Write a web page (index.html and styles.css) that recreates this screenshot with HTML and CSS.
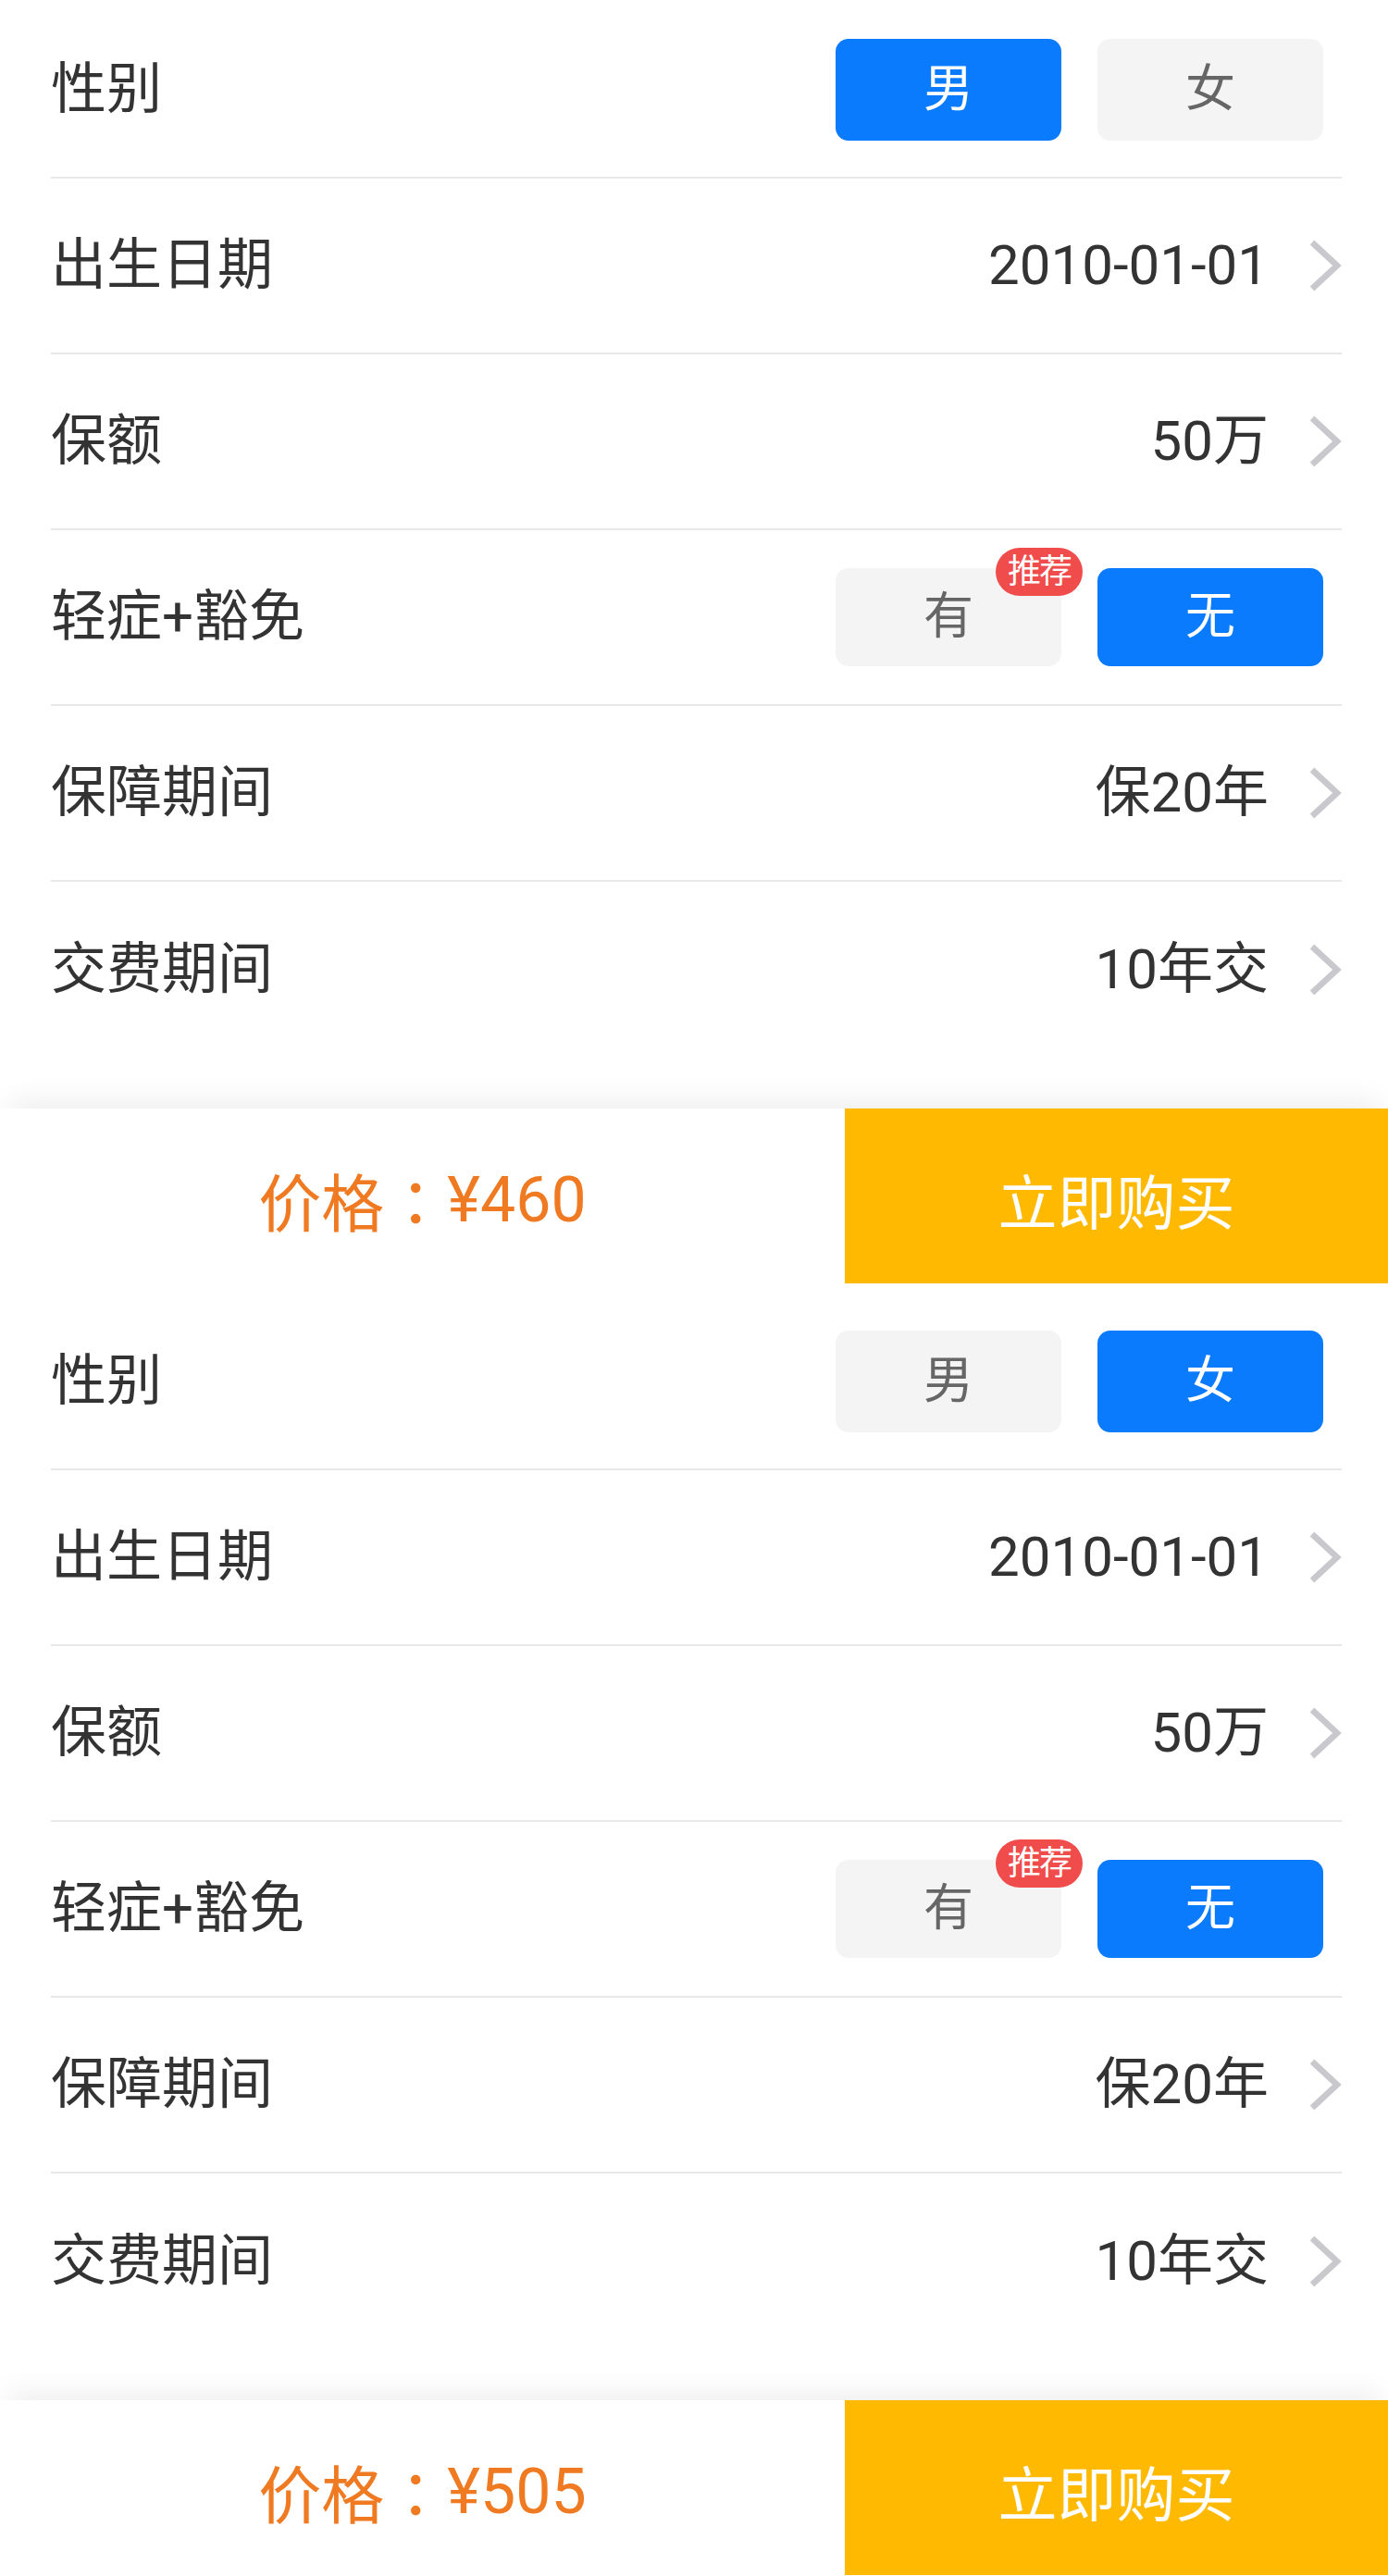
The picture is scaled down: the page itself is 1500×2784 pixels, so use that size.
FILE: index.html
```html
<!DOCTYPE html>
<html lang="zh-CN">
<head>
<meta charset="utf-8">
<title>保费试算</title>
<link rel="stylesheet" href="styles.css">
</head>
<body>
<div class="page">
  <section class="form">
    <div class="row">
      <span class="label">性别</span>
      <div class="seg seg-tall">
        <span class="opt active">男</span>
        <span class="opt">女</span>
      </div>
    </div>
    <div class="row">
      <span class="label">出生日期</span>
      <div class="value"><span>2010-01-01</span><svg class="chev" viewBox="0 0 36 58"><path d="M4 4 L31 29 L4 54" /></svg></div>
    </div>
    <div class="row">
      <span class="label">保额</span>
      <div class="value"><span>50万</span><svg class="chev" viewBox="0 0 36 58"><path d="M4 4 L31 29 L4 54" /></svg></div>
    </div>
    <div class="row">
      <span class="label">轻症+豁免</span>
      <div class="seg">
        <span class="opt">有<span class="badge">推荐</span></span>
        <span class="opt active">无</span>
      </div>
    </div>
    <div class="row">
      <span class="label">保障期间</span>
      <div class="value"><span>保20年</span><svg class="chev" viewBox="0 0 36 58"><path d="M4 4 L31 29 L4 54" /></svg></div>
    </div>
    <div class="row">
      <span class="label">交费期间</span>
      <div class="value"><span>10年交</span><svg class="chev" viewBox="0 0 36 58"><path d="M4 4 L31 29 L4 54" /></svg></div>
    </div>
  </section>
  <div class="bar">
    <div class="price">价格<span class="colon">：</span>¥460</div>
    <div class="buy">立即购买</div>
  </div>

  <section class="form">
    <div class="row">
      <span class="label">性别</span>
      <div class="seg seg-tall">
        <span class="opt">男</span>
        <span class="opt active">女</span>
      </div>
    </div>
    <div class="row">
      <span class="label">出生日期</span>
      <div class="value"><span>2010-01-01</span><svg class="chev" viewBox="0 0 36 58"><path d="M4 4 L31 29 L4 54" /></svg></div>
    </div>
    <div class="row">
      <span class="label">保额</span>
      <div class="value"><span>50万</span><svg class="chev" viewBox="0 0 36 58"><path d="M4 4 L31 29 L4 54" /></svg></div>
    </div>
    <div class="row">
      <span class="label">轻症+豁免</span>
      <div class="seg">
        <span class="opt">有<span class="badge">推荐</span></span>
        <span class="opt active">无</span>
      </div>
    </div>
    <div class="row">
      <span class="label">保障期间</span>
      <div class="value"><span>保20年</span><svg class="chev" viewBox="0 0 36 58"><path d="M4 4 L31 29 L4 54" /></svg></div>
    </div>
    <div class="row">
      <span class="label">交费期间</span>
      <div class="value"><span>10年交</span><svg class="chev" viewBox="0 0 36 58"><path d="M4 4 L31 29 L4 54" /></svg></div>
    </div>
  </section>
  <div class="bar">
    <div class="price">价格<span class="colon">：</span>¥505</div>
    <div class="buy">立即购买</div>
  </div>
</div>
</body>
</html>
```

FILE: styles.css
```css
* { box-sizing: border-box; }

html, body {
  margin: 0;
  padding: 0;
  background: #ffffff;
}

body {
  font-family: Roboto, "Noto Sans CJK SC", "Noto Sans", sans-serif;
  color: #333333;
  overflow: hidden;
}

.page {
  margin-top: -9px;
}

.form {
  padding: 12px 50px 55px 55px;
  background: #ffffff;
}

.row {
  height: 190px;
  display: flex;
  align-items: center;
  justify-content: space-between;
  border-bottom: 2px solid #e8e8e8;
}

.row:last-child {
  border-bottom: none;
}

.label {
  font-size: 60px;
  line-height: 1;
  color: #333333;
}

.value {
  display: flex;
  align-items: center;
  gap: 43px;
  font-size: 60px;
  line-height: 1;
  color: #333333;
}

.chev {
  width: 36px;
  height: 58px;
  display: block;
}

.chev path {
  fill: none;
  stroke: #c8c8cd;
  stroke-width: 6.5;
  stroke-linejoin: miter;
}

.seg {
  display: flex;
  gap: 39px;
  margin-right: 20px;
}

.opt {
  position: relative;
  width: 244px;
  height: 106px;
  border-radius: 14px;
  background: #f4f4f4;
  color: #666666;
  font-size: 54px;
  line-height: 1;
  display: flex;
  align-items: center;
  justify-content: center;
}

.seg-tall .opt {
  height: 110px;
}

.opt.active {
  background: #0a7bfd;
  color: #ffffff;
}

.badge {
  position: absolute;
  top: -22px;
  right: -23px;
  width: 94px;
  height: 52px;
  border-radius: 26px;
  background: #f04c4c;
  color: #ffffff;
  font-size: 36px;
  line-height: 52px;
  text-align: center;
  letter-spacing: -2px;
}

.bar {
  position: relative;
  height: 189px;
  display: flex;
  box-shadow: 0 -18px 30px -10px rgba(0, 0, 0, 0.07);
}

.price {
  flex: 0 0 913px;
  background: #ffffff;
  color: #ef7a22;
  font-size: 68px;
  padding-top: 8px;
  display: flex;
  align-items: center;
  justify-content: center;
}

.colon {
  font-family: "Noto Sans CJK TC", "Noto Sans CJK SC", sans-serif;
}

.buy {
  flex: 1;
  background: #ffb900;
  color: #ffffff;
  font-size: 64px;
  padding-top: 4px;
  display: flex;
  align-items: center;
  justify-content: center;
}
```
